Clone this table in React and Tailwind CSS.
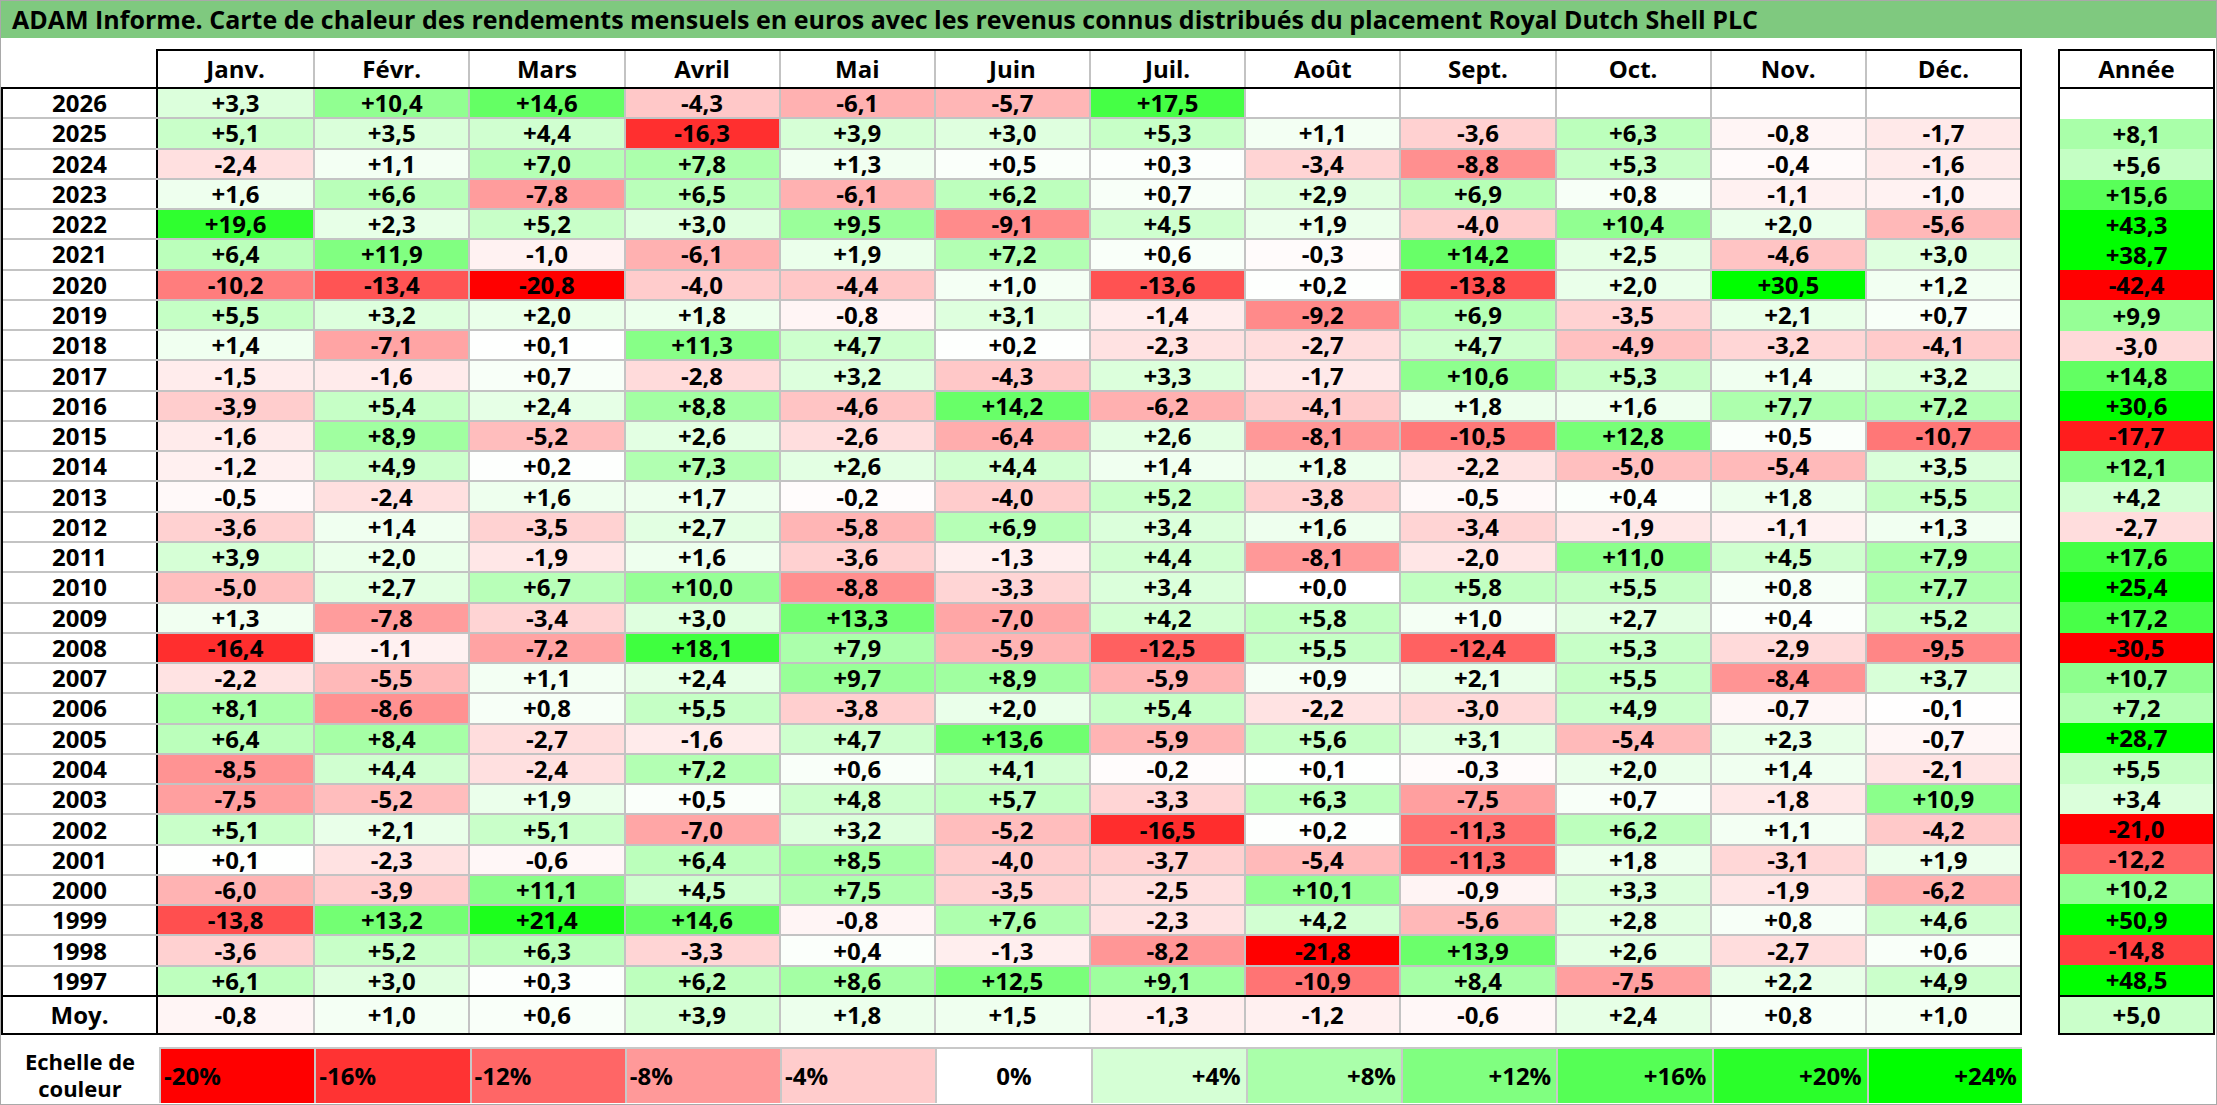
import React from "react";

const MONTHS = ["Janv.", "Févr.", "Mars", "Avril", "Mai", "Juin", "Juil.", "Août", "Sept.", "Oct.", "Nov.", "Déc."];

// year, 12 months, then year total
const ROWS = [
  ["2026", "+3,3 +10,4 +14,6 -4,3 -6,1 -5,7 +17,5 . . . . . ."],
  ["2025", "+5,1 +3,5 +4,4 -16,3 +3,9 +3,0 +5,3 +1,1 -3,6 +6,3 -0,8 -1,7 +8,1"],
  ["2024", "-2,4 +1,1 +7,0 +7,8 +1,3 +0,5 +0,3 -3,4 -8,8 +5,3 -0,4 -1,6 +5,6"],
  ["2023", "+1,6 +6,6 -7,8 +6,5 -6,1 +6,2 +0,7 +2,9 +6,9 +0,8 -1,1 -1,0 +15,6"],
  ["2022", "+19,6 +2,3 +5,2 +3,0 +9,5 -9,1 +4,5 +1,9 -4,0 +10,4 +2,0 -5,6 +43,3"],
  ["2021", "+6,4 +11,9 -1,0 -6,1 +1,9 +7,2 +0,6 -0,3 +14,2 +2,5 -4,6 +3,0 +38,7"],
  ["2020", "-10,2 -13,4 -20,8 -4,0 -4,4 +1,0 -13,6 +0,2 -13,8 +2,0 +30,5 +1,2 -42,4"],
  ["2019", "+5,5 +3,2 +2,0 +1,8 -0,8 +3,1 -1,4 -9,2 +6,9 -3,5 +2,1 +0,7 +9,9"],
  ["2018", "+1,4 -7,1 +0,1 +11,3 +4,7 +0,2 -2,3 -2,7 +4,7 -4,9 -3,2 -4,1 -3,0"],
  ["2017", "-1,5 -1,6 +0,7 -2,8 +3,2 -4,3 +3,3 -1,7 +10,6 +5,3 +1,4 +3,2 +14,8"],
  ["2016", "-3,9 +5,4 +2,4 +8,8 -4,6 +14,2 -6,2 -4,1 +1,8 +1,6 +7,7 +7,2 +30,6"],
  ["2015", "-1,6 +8,9 -5,2 +2,6 -2,6 -6,4 +2,6 -8,1 -10,5 +12,8 +0,5 -10,7 -17,7"],
  ["2014", "-1,2 +4,9 +0,2 +7,3 +2,6 +4,4 +1,4 +1,8 -2,2 -5,0 -5,4 +3,5 +12,1"],
  ["2013", "-0,5 -2,4 +1,6 +1,7 -0,2 -4,0 +5,2 -3,8 -0,5 +0,4 +1,8 +5,5 +4,2"],
  ["2012", "-3,6 +1,4 -3,5 +2,7 -5,8 +6,9 +3,4 +1,6 -3,4 -1,9 -1,1 +1,3 -2,7"],
  ["2011", "+3,9 +2,0 -1,9 +1,6 -3,6 -1,3 +4,4 -8,1 -2,0 +11,0 +4,5 +7,9 +17,6"],
  ["2010", "-5,0 +2,7 +6,7 +10,0 -8,8 -3,3 +3,4 +0,0 +5,8 +5,5 +0,8 +7,7 +25,4"],
  ["2009", "+1,3 -7,8 -3,4 +3,0 +13,3 -7,0 +4,2 +5,8 +1,0 +2,7 +0,4 +5,2 +17,2"],
  ["2008", "-16,4 -1,1 -7,2 +18,1 +7,9 -5,9 -12,5 +5,5 -12,4 +5,3 -2,9 -9,5 -30,5"],
  ["2007", "-2,2 -5,5 +1,1 +2,4 +9,7 +8,9 -5,9 +0,9 +2,1 +5,5 -8,4 +3,7 +10,7"],
  ["2006", "+8,1 -8,6 +0,8 +5,5 -3,8 +2,0 +5,4 -2,2 -3,0 +4,9 -0,7 -0,1 +7,2"],
  ["2005", "+6,4 +8,4 -2,7 -1,6 +4,7 +13,6 -5,9 +5,6 +3,1 -5,4 +2,3 -0,7 +28,7"],
  ["2004", "-8,5 +4,4 -2,4 +7,2 +0,6 +4,1 -0,2 +0,1 -0,3 +2,0 +1,4 -2,1 +5,5"],
  ["2003", "-7,5 -5,2 +1,9 +0,5 +4,8 +5,7 -3,3 +6,3 -7,5 +0,7 -1,8 +10,9 +3,4"],
  ["2002", "+5,1 +2,1 +5,1 -7,0 +3,2 -5,2 -16,5 +0,2 -11,3 +6,2 +1,1 -4,2 -21,0"],
  ["2001", "+0,1 -2,3 -0,6 +6,4 +8,5 -4,0 -3,7 -5,4 -11,3 +1,8 -3,1 +1,9 -12,2"],
  ["2000", "-6,0 -3,9 +11,1 +4,5 +7,5 -3,5 -2,5 +10,1 -0,9 +3,3 -1,9 -6,2 +10,2"],
  ["1999", "-13,8 +13,2 +21,4 +14,6 -0,8 +7,6 -2,3 +4,2 -5,6 +2,8 +0,8 +4,6 +50,9"],
  ["1998", "-3,6 +5,2 +6,3 -3,3 +0,4 -1,3 -8,2 -21,8 +13,9 +2,6 -2,7 +0,6 -14,8"],
  ["1997", "+6,1 +3,0 +0,3 +6,2 +8,6 +12,5 +9,1 -10,9 +8,4 -7,5 +2,2 +4,9 +48,5"],
].map(([year, s]) => ({ year, cells: s.split(" ").map((c) => (c === "." ? "" : c)) }));

const AVG = "-0,8 +1,0 +0,6 +3,9 +1,8 +1,5 -1,3 -1,2 -0,6 +2,4 +0,8 +1,0 +5,0".split(" ");

const SCALE = [-20, -16, -12, -8, -4, 0, 4, 8, 12, 16, 20, 24];

// red below zero (full at -20), green above (full at +24)
function heat(text) {
  if (text === "" || text == null) return "#ffffff";
  const v = typeof text === "number" ? text : parseFloat(text.replace(",", "."));
  if (v < 0) {
    const c = Math.round(255 * (1 - Math.min(1, -v / 20)));
    return `rgb(255,${c},${c})`;
  }
  const c = Math.round(255 * (1 - Math.min(1, v / 24)));
  return `rgb(${c},255,${c})`;
}

const grid = "grid grid-cols-[155px_repeat(12,minmax(0,1fr))]";

const Cell = ({ value, first }) => (
  <div
    className={`flex items-center justify-center ${first ? "" : "border-l-2 border-[#c3c3c3]"}`}
    style={{ backgroundColor: heat(value) }}
  >
    {value}
  </div>
);

export default function App() {
  return (
    <div className="w-[2217px] h-[1105px] bg-white border border-[#a9a9a9] [font-family:'Open_Sans',sans-serif] font-bold text-black overflow-hidden">
      {/* Title */}
      <div className="h-[37px] bg-[#7fc97f] flex items-center pl-[11px] text-[25px] leading-none whitespace-nowrap">
        ADAM Informe. Carte de chaleur des rendements mensuels en euros avec les revenus connus distribués du placement Royal Dutch Shell PLC
      </div>

      <div className="mt-[11px] flex text-[24px] leading-none">
        {/* Monthly table */}
        <div className="w-[2021px]">
          <div className="flex h-[38px]">
            <div className="w-[155px] shrink-0" />
            <div className="flex-1 grid grid-cols-12 border-2 border-b-0 border-black">
              {MONTHS.map((m, i) => (
                <div
                  key={m}
                  className={`flex items-center justify-center ${i ? "border-l-2 border-[#c3c3c3]" : ""}`}
                >
                  {m}
                </div>
              ))}
            </div>
          </div>

          <div className="h-[948px] border-2 border-black flex flex-col">
            <div className="flex-1 min-h-0 flex flex-col">
              {ROWS.map((r, ri) => (
                <div
                  key={r.year}
                  className={`flex-1 min-h-0 ${grid} ${ri ? "border-t-2 border-[#c3c3c3]" : ""}`}
                >
                  <div className="flex items-center justify-center border-r-2 border-black">{r.year}</div>
                  {r.cells.slice(0, 12).map((c, i) => (
                    <Cell key={i} value={c} first={i === 0} />
                  ))}
                </div>
              ))}
            </div>
            <div className={`h-[38px] shrink-0 border-t-2 border-black ${grid}`}>
              <div className="flex items-center justify-center border-r-2 border-black">Moy.</div>
              {AVG.slice(0, 12).map((c, i) => (
                <Cell key={i} value={c} first={i === 0} />
              ))}
            </div>
          </div>
        </div>

        {/* Year totals */}
        <div className="ml-[36px] w-[157px]">
          <div className="h-[38px] border-2 border-b-0 border-black flex items-center justify-center">Année</div>
          <div className="h-[948px] border-2 border-black flex flex-col">
            <div className="flex-1 min-h-0 flex flex-col">
              {ROWS.map((r) => (
                <div
                  key={r.year}
                  className="flex-1 min-h-0 flex items-center justify-center"
                  style={{ backgroundColor: heat(r.cells[12]) }}
                >
                  {r.cells[12]}
                </div>
              ))}
            </div>
            <div
              className="h-[38px] shrink-0 border-t-2 border-black flex items-center justify-center"
              style={{ backgroundColor: heat(AVG[12]) }}
            >
              {AVG[12]}
            </div>
          </div>
        </div>
      </div>

      {/* Colour scale */}
      <div className="mt-[12px] w-[2021px] h-[56px] grid grid-cols-[158px_repeat(12,minmax(0,1fr))] text-[24px] leading-none">
        <div className="flex flex-col items-center justify-center leading-[27px] text-[22px]">
          <span>Echelle de</span>
          <span>couleur</span>
        </div>
        {SCALE.map((s) => (
          <div
            key={s}
            className={`flex items-center border-l-2 border-t-2 border-[#c8c8c8] ${
              s < 0 ? "justify-start pl-[3px]" : s === 0 ? "justify-center" : "justify-end pr-[5px]"
            }`}
            style={{ backgroundColor: heat(s) }}
          >
            {s > 0 ? `+${s}%` : `${s}%`}
          </div>
        ))}
      </div>
    </div>
  );
}
